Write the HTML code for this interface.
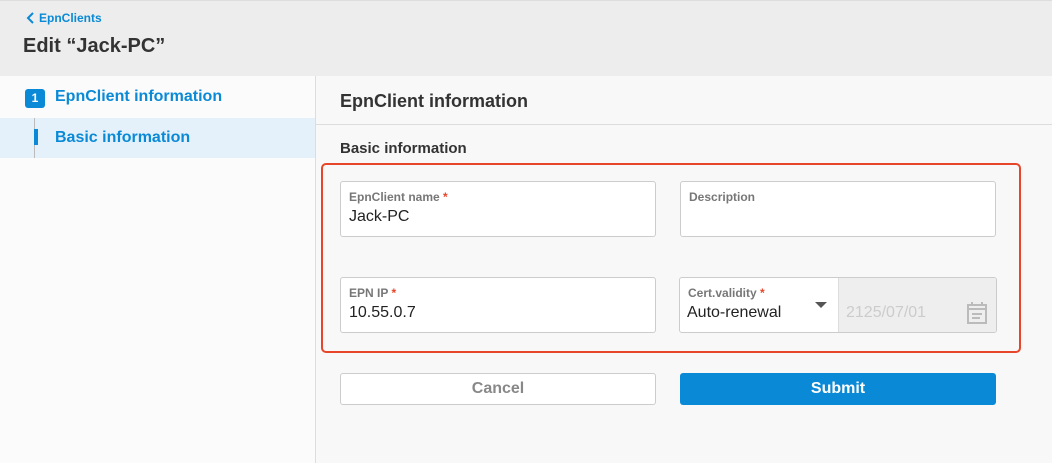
<!DOCTYPE html><html><head><style>
*{box-sizing:border-box;margin:0;padding:0}
body{width:1052px;height:463px;overflow:hidden;font-family:"Liberation Sans",sans-serif;background:#f8f8f8;position:relative}
.a{position:absolute}
.hdr{left:0;top:0;width:1052px;height:76px;background:#ededed;border-top:1px solid #ddd}
.side{left:0;top:76px;width:316px;height:387px;background:#fbfbfb;border-right:1px solid #ddd}
.f{background:#fff;border:1px solid #ccc;border-radius:3px}
.lab{font-size:12px;font-weight:bold;color:#777}
.lab b{color:#e8462a}
.val{font-size:16px;color:#222}
</style></head><body>
<div class="a hdr"></div>
<svg class="a" style="left:26px;top:12px" width="10" height="12"><path d="M7 1L2 6L7 11" stroke="#0a8ad6" stroke-width="2" fill="none"/></svg>
<div class="a" style="left:39px;top:11px;font-size:12px;font-weight:bold;color:#0a8ad6">EpnClients</div>
<div class="a" style="left:23px;top:35px;font-size:20px;font-weight:bold;color:#333">Edit “Jack-PC”</div>
<div class="a side"></div>
<div class="a" style="left:25px;top:89px;width:20px;height:19px;background:#0a8ad6;border-radius:3px;color:#fff;font-size:12px;font-weight:bold;text-align:center;line-height:19px">1</div>
<div class="a" style="left:55px;top:88px;font-size:16px;font-weight:bold;color:#0a8ad6">EpnClient information</div>
<div class="a" style="left:0;top:118px;width:315px;height:40px;background:#e4f1fb"></div>
<div class="a" style="left:34px;top:118px;width:1px;height:40px;background:#bbb"></div>
<div class="a" style="left:34px;top:129px;width:4px;height:16px;background:#0a8ad6"></div>
<div class="a" style="left:55px;top:129px;font-size:16px;font-weight:bold;color:#0a8ad6">Basic information</div>
<div class="a" style="left:316px;top:124px;width:736px;height:1px;background:#ddd"></div>
<div class="a" style="left:340px;top:91px;font-size:18px;font-weight:bold;color:#333">EpnClient information</div>
<div class="a" style="left:340px;top:140px;font-size:15px;font-weight:bold;color:#333">Basic information</div>
<div class="a" style="left:321px;top:163px;width:700px;height:190px;border:2px solid #e8462a;border-radius:5px"></div>
<div class="a f" style="left:340px;top:181px;width:316px;height:56px"><div class="a lab" style="left:8px;top:8px">EpnClient name <b>*</b></div><div class="a val" style="left:8px;top:26px">Jack-PC</div></div>
<div class="a f" style="left:680px;top:181px;width:316px;height:56px"><div class="a lab" style="left:8px;top:8px">Description</div></div>
<div class="a f" style="left:340px;top:277px;width:316px;height:56px"><div class="a lab" style="left:8px;top:8px">EPN IP <b>*</b></div><div class="a val" style="left:8px;top:26px">10.55.0.7</div></div>
<div class="a f" style="left:679px;top:277px;width:318px;height:56px;overflow:hidden">
<div class="a lab" style="left:8px;top:8px">Cert.validity <b>*</b></div><div class="a val" style="left:7px;top:26px">Auto-renewal</div>
<div class="a" style="left:135px;top:24px;width:0;height:0;border-left:6px solid transparent;border-right:6px solid transparent;border-top:6px solid #555"></div>
<div class="a" style="left:158px;top:0;width:160px;height:56px;background:#eee;border-left:1px solid #ddd"></div>
<div class="a" style="left:166px;top:26px;font-size:16px;color:#ccc">2125/07/01</div>
<svg class="a" style="left:287px;top:24px" width="20" height="22"><rect x="1" y="3" width="18" height="18" fill="none" stroke="#bbb" stroke-width="2"/><path d="M1 7H19M5 0V4M15 0V4M5 12H15M5 16H13" stroke="#bbb" stroke-width="2"/></svg>
</div>
<div class="a" style="left:340px;top:373px;width:316px;height:32px;background:#fff;border:1px solid #ccc;border-radius:3px;text-align:center;line-height:30px;font-size:16px;font-weight:bold;color:#888">Cancel</div>
<div class="a" style="left:680px;top:373px;width:316px;height:32px;background:#0a8ad6;border-radius:3px;text-align:center;line-height:31px;font-size:16px;font-weight:bold;color:#fff">Submit</div>
</body></html>
